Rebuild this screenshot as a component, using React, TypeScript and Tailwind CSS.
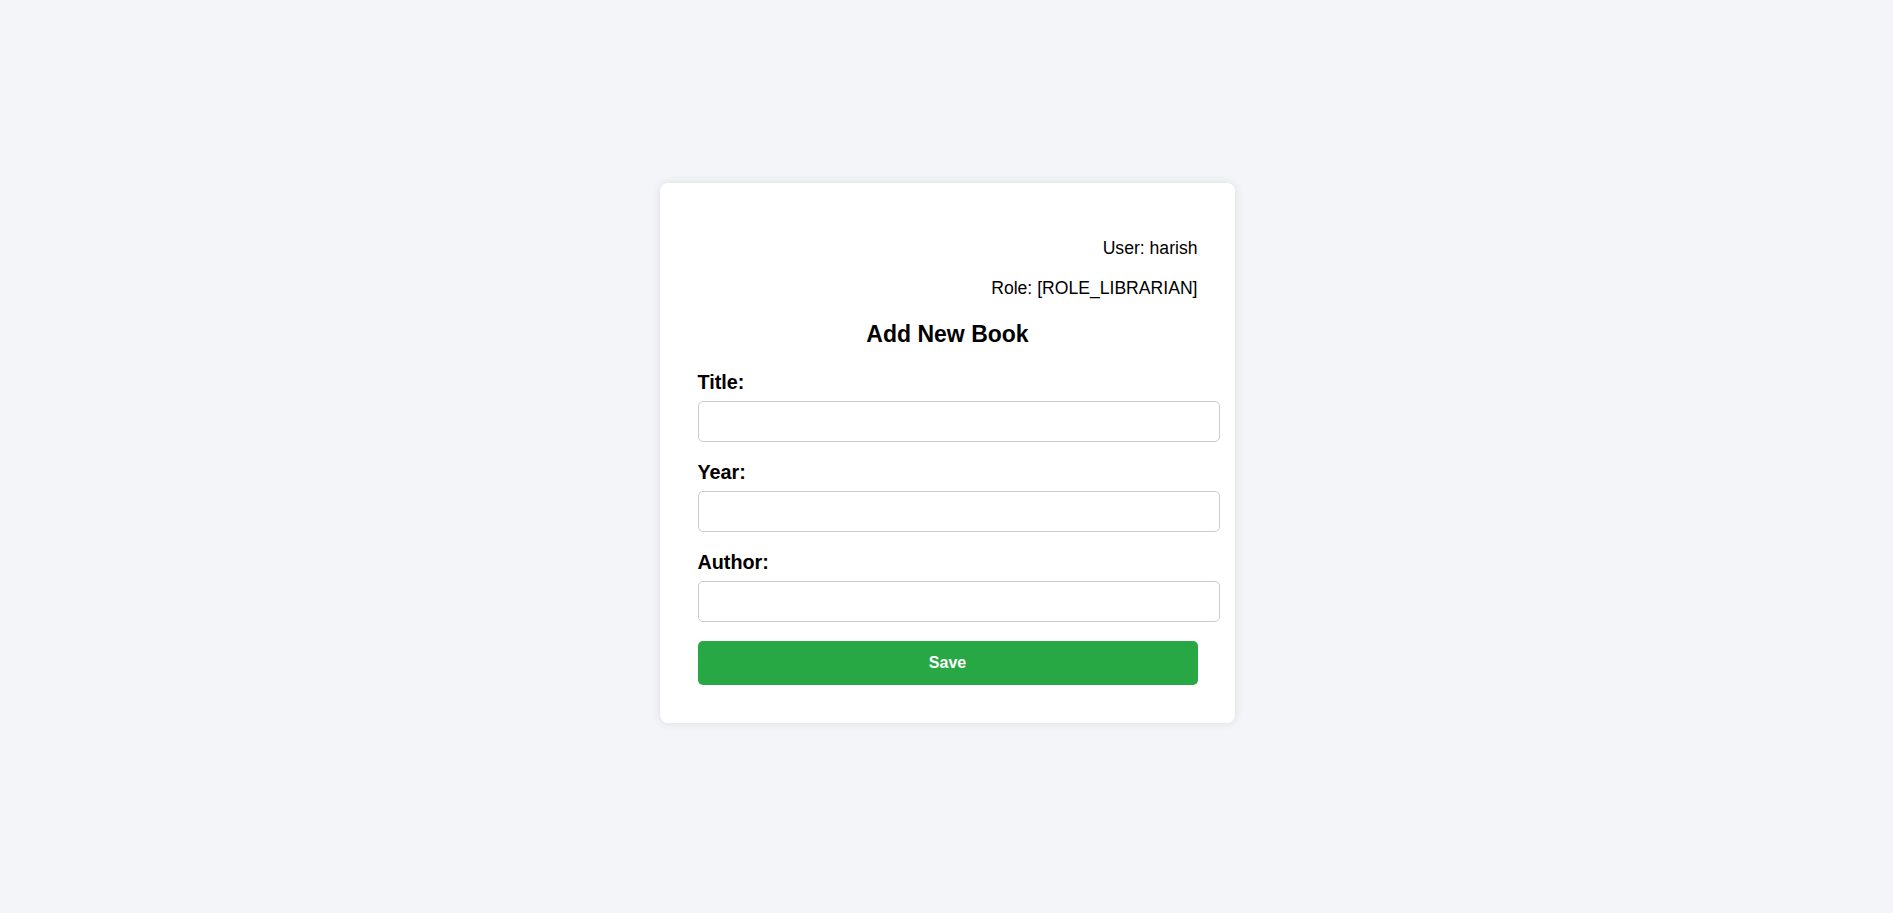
import React from "react";

function Field({ label, first }: { label: string; first?: boolean }) {
  return (
    <>
      <label
        className={`${first ? "mt-[24.3px]" : "mt-[18.8px]"} block text-[19.8px] leading-[23px] font-bold text-black`}
      >
        {label}
      </label>
      <input
        type="text"
        className="mt-[7.2px] h-[41px] w-[522px] shrink-0 rounded-[5px] border border-[#cccccc] bg-white px-[10px] text-[17.6px] outline-none"
      />
    </>
  );
}

export default function App() {
  return (
    <div
      className="min-h-screen w-full bg-[#f4f5f9] flex justify-center items-start pt-[183px] pl-[2px]"
      style={{ fontFamily: '"Liberation Sans", Arial, sans-serif' }}
    >
      <div className="w-[575px] rounded-[8px] bg-white pt-[37.5px] pb-[38px] px-[37.5px] shadow-[0_0_10px_rgba(0,0,0,0.1)] flex flex-col">
        <div className="mt-[17.5px] text-right text-[17.6px] leading-[20px] text-black">
          User: harish
        </div>
        <div className="mt-[20px] text-right text-[17.6px] leading-[20px] text-black">
          Role: [ROLE_LIBRARIAN]
        </div>
        <h2 className="mt-[22.5px] text-center text-[23px] leading-[26px] font-bold text-black">
          Add New Book
        </h2>
        <Field label="Title:" first />
        <Field label="Year:" />
        <Field label="Author:" />
        <button
          type="button"
          className="mt-[19px] h-[44px] w-full rounded-[5px] bg-[#28a745] text-[16px] font-bold text-white"
        >
          Save
        </button>
      </div>
    </div>
  );
}
